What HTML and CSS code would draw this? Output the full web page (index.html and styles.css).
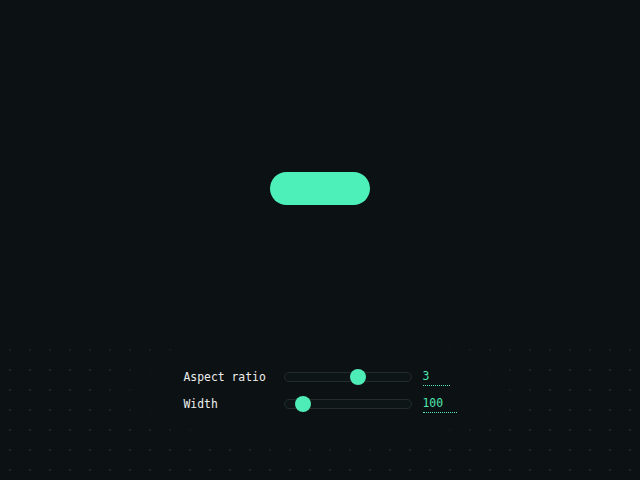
FILE: index.html
```html
<!DOCTYPE html>
<html>
<head>
<meta charset="utf-8">
<link rel="stylesheet" href="styles.css">
</head>
<body>
<div class="dots"></div>
<main class="page">
  <div class="pill"></div>
  <section class="controls">
    <label class="label">Aspect ratio</label>
    <div class="track"><span class="thumb" style="left:73px"></span></div>
    <span class="value v1">3</span>
    <label class="label">Width</label>
    <div class="track"><span class="thumb" style="left:18px"></span></div>
    <span class="value v2">100</span>
  </section>
</main>
</body>
</html>
```
FILE: styles.css
```css
html, body {
  margin: 0;
  padding: 0;
  width: 640px;
  height: 480px;
  overflow: hidden;
  background: #0c1113;
}
.dots {
  position: absolute;
  left: 0;
  top: 0;
  width: 640px;
  height: 480px;
  background-image: radial-gradient(circle, #1f2729 0.9px, transparent 1.4px);
  background-size: 20px 20px;
  -webkit-mask-image: linear-gradient(to bottom, transparent 330px, #000 360px), radial-gradient(ellipse 225px 66px at 320px 390px, transparent 75%, #000 100%);
  -webkit-mask-composite: source-in;
  mask-image: linear-gradient(to bottom, transparent 330px, #000 360px), radial-gradient(ellipse 225px 66px at 320px 390px, transparent 75%, #000 100%);
  mask-composite: intersect;
}
.page {
  position: relative;
  display: flex;
  flex-direction: column;
  align-items: center;
  font-family: "DejaVu Sans Mono", monospace;
  font-size: 11.4px;
}
.pill {
  margin-top: 172px;
  width: 100px;
  height: 33px;
  border-radius: 17px;
  background: #4ef0b9;
}
.controls {
  margin-top: 163px;
  display: grid;
  grid-template-columns: 100px 128px 45px;
  row-gap: 10px;
  align-items: center;
}
.label {
  color: #eceeed;
  line-height: 16px;
}
.track {
  position: relative;
  height: 10px;
  border: 1px solid #222c2c;
  border-radius: 6px;
  background: #0e1516;
  box-sizing: border-box;
}
.thumb {
  position: absolute;
  top: -4px;
  width: 16px;
  height: 16px;
  margin-left: -8px;
  border-radius: 50%;
  background: #4eecb6;
}
.value {
  margin-left: 11px;
  color: #4ee8b2;
  line-height: 14px;
  padding-bottom: 2px;
  border-bottom: 1px dotted #4ee8b2;
  justify-self: start;
  position: relative;
  top: 1px;
}
.v1 { width: 27px; }
.v2 { width: 34px; }
```
